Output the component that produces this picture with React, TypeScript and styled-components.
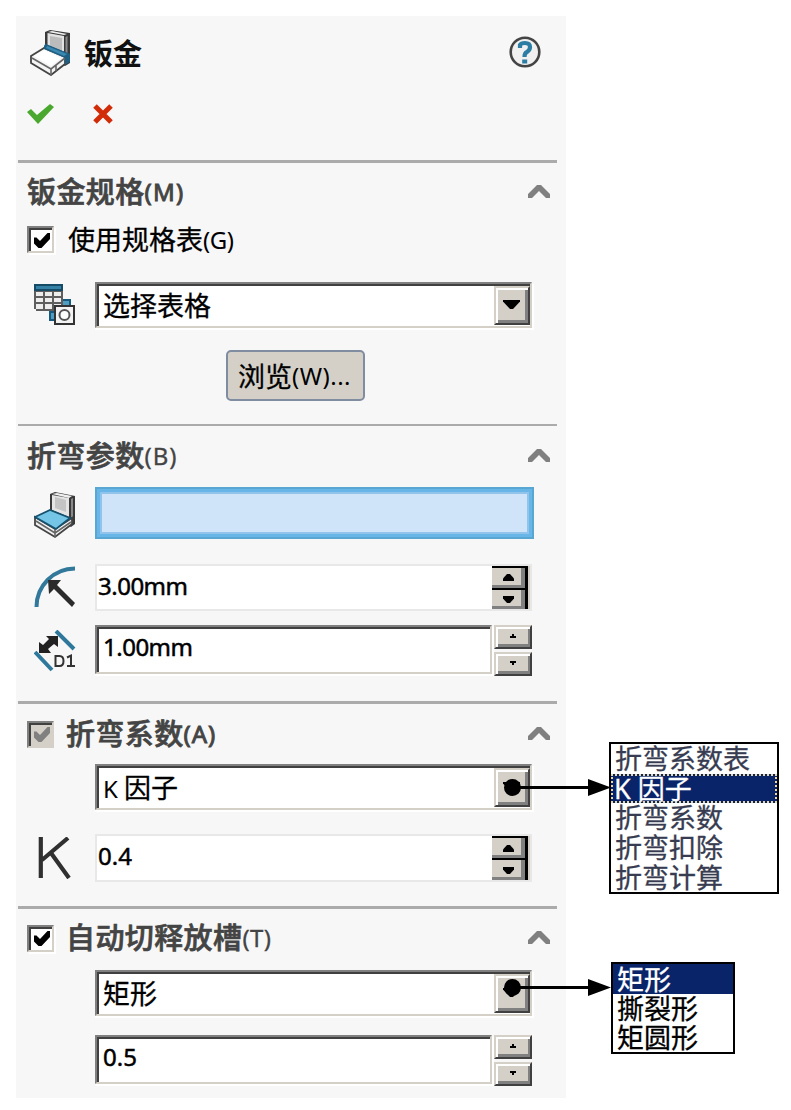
import React from "react";
import styled, { createGlobalStyle, css } from "styled-components";

const Global = createGlobalStyle`
  * { box-sizing: border-box; }
  body { margin: 0; background: #fff; }
  svg { display: block; flex: none; }
`;

const latin = `"Noto Sans", "Noto Sans CJK SC", sans-serif`;

const Stage = styled.main`
  position: relative;
  width: 791px;
  height: 1110px;
  padding: 16px;
  overflow: hidden;
  font-family: ${latin};
  color: #000;
`;

const Panel = styled.div`
  width: 550px;
  height: 1082px;
  background: #f7f7f7;
`;

const Header = styled.header`
  height: 144px;
  padding: 13px 25px 0 11px;
`;

const TitleBar = styled.div`
  display: flex;
  align-items: flex-start;
  height: 74px;
  padding-left: 3px;
`;

const Title = styled.h1`
  flex: 1;
  margin: 2px 0 0 13px;
  font-size: 29px;
  line-height: 46px;
  font-weight: 700;
  color: #111;
`;

const HelpSlot = styled.div`
  padding-top: 7px;
`;

const Actions = styled.div`
  display: flex;
  gap: 38px;
`;

const Section = styled.section<{ $height: number; $rule?: number }>`
  height: ${(p) => p.$height}px;
  margin: 0 9px 0 2px;
  padding: 0 2px 0 9px;
  border-top: ${(p) => p.$rule ?? 3}px solid #ababab;
`;

const SectionHead = styled.div<{ $top: number }>`
  display: flex;
  align-items: center;
  height: 30px;
  margin-top: ${(p) => p.$top}px;
  padding-right: 5px;
`;

const Heading = styled.h2<{ $indent?: number }>`
  display: flex;
  flex: 1;
  margin: 0 0 0 ${(p) => p.$indent ?? 0}px;
  font-size: 29px;
  line-height: 32px;
  font-weight: 500;
  letter-spacing: 0.4px;
  -webkit-text-stroke: 0.7px #444;
  color: #444;
  white-space: nowrap;
`;

const Key = styled.span<{ $bold?: boolean; $spacing?: number; $thin?: boolean }>`
  font-size: 24px;
  font-weight: 400;
  letter-spacing: ${(p) => p.$spacing ?? 0}px;
  -webkit-text-stroke-width: ${(p) => (p.$bold ? 0.9 : p.$thin ? 0.3 : 0)}px;
`;

const Row = styled.div<{ $top: number; $height: number }>`
  display: flex;
  align-items: flex-start;
  height: ${(p) => p.$height}px;
  margin-top: ${(p) => p.$top}px;
`;

const IconCell = styled.div<{ $top?: number }>`
  width: 68px;
  padding: ${(p) => p.$top ?? 0}px 0 0 7px;
`;

const Check = styled.span<{ $disabled?: boolean }>`
  display: flex;
  flex: none;
  align-items: center;
  justify-content: center;
  width: 27px;
  height: 27px;
  padding: 1px 0 0 2px;
  border: 2px solid;
  border-color: #808080 #d4d0c8 #d4d0c8 #808080;
  background: ${(p) => (p.$disabled ? "#d4d0c8" : "#fff")};
  box-shadow: inset 2px 2px 0 #404040, 2px 2px 0 ${(p) => (p.$disabled ? "#f7f7f7" : "#fff")};
`;

const CheckLabel = styled.span`
  display: flex;
  margin-left: 14px;
  font-size: 27px;
  line-height: 28px;
  white-space: nowrap;
  -webkit-text-stroke: 0.3px #000;
`;

const sunken = css`
  border: 2px solid;
  border-color: #808080 #d4d0c8 #d4d0c8 #808080;
  box-shadow: inset 2px 2px 0 #404040, 2px 2px 0 #fff, 0 2px 0 #fff;
`;

const Combo = styled.div`
  ${sunken}
  display: flex;
  justify-content: space-between;
  width: 437px;
  height: 46px;
  padding: 2px 0 0 6px;
  background: #fff;
  font-size: 27px;
  line-height: 40px;
  white-space: nowrap;
  -webkit-text-stroke: 0.3px #000;
`;

const DropButton = styled.span`
  display: flex;
  align-items: center;
  justify-content: center;
  width: 36px;
  height: 39px;
  padding: 0 2px 3px 0;
  border: 2px solid;
  border-color: #d4d0c8 #404040 #404040 #d4d0c8;
  background: #d4d0c8;
  box-shadow: inset 2px 2px 0 #fff, inset -3px -3px 0 #808080;
`;

const Field = styled.div`
  ${sunken}
  width: 397px;
  height: 49px;
  padding: 0 0 0 6px;
  background: #fff;
  font-size: 24px;
  line-height: 40px;
`;

const FlatField = styled.div<{ $height: number }>`
  display: flex;
  justify-content: space-between;
  width: 437px;
  height: ${(p) => p.$height}px;
  padding-left: 1px;
  border: 2px solid #e8e8e8;
  background: #fff;
  font-size: 24px;
  line-height: 40px;
`;

const Value = styled.span<{ $spacing?: number }>`
  letter-spacing: ${(p) => p.$spacing ?? -0.5}px;
  -webkit-text-stroke: 0.5px #000;
`;

const Stepper = styled.div`
  display: flex;
  flex-direction: column;
  gap: 3px;
  margin-left: 2px;
`;

const StepButton = styled.span`
  display: flex;
  align-items: center;
  justify-content: center;
  width: 38px;
  height: 24px;
  padding-bottom: 2px;
  border: 2px solid;
  border-color: #d4d0c8 #404040 #404040 #d4d0c8;
  background: #d4d0c8;
  box-shadow: inset 2px 2px 0 #fff, inset -2px -3px 0 #808080;
`;

const SpinColumn = styled.div`
  display: flex;
  flex-direction: column;
  width: 38px;
  border-right: 2px solid #d4d0c8;
`;

const SpinHalf = styled.span`
  display: flex;
  flex: 1;
  align-items: center;
  justify-content: center;
  border-top: 2px solid #000;
  border-right: 3px solid #000;
  background: #d4d0c8;
  box-shadow: inset -4px -3px 0 #808080;
`;

const Selection = styled.div`
  width: 439px;
  height: 52px;
  border: 2px solid #5aa6d2;
  background: #cfe4f8;
  box-shadow: inset 0 0 0 3px #67b6e7, inset 0 0 0 5px #92c3ea;
`;

const Browse = styled.button`
  display: flex;
  align-items: center;
  width: 139px;
  height: 51px;
  margin: 0 0 0 199px;
  padding: 0 0 0 10px;
  border: 2px solid #808ca0;
  border-radius: 5px;
  background: #d4d0c8;
  font: 27px ${latin};
  color: #000;
  white-space: nowrap;
  -webkit-text-stroke: 0.3px #000;
`;

const Popup = styled.ul<{ $x: number; $y: number; $w: number; $h: number }>`
  position: absolute;
  left: ${(p) => p.$x}px;
  top: ${(p) => p.$y}px;
  width: ${(p) => p.$w}px;
  height: ${(p) => p.$h}px;
  margin: 0;
  padding: 0;
  border: 2px solid #000;
  background: #fff;
  list-style: none;
`;

const Option = styled.li<{ $height: number; $selected?: boolean; $muted?: boolean; $dotted?: boolean }>`
  display: flex;
  align-items: center;
  height: ${(p) => p.$height}px;
  padding-left: ${(p) => (p.$dotted ? 1 : 4)}px;
  border: ${(p) => (p.$dotted ? "2px dotted #e8d9a4" : "0")};
  background: ${(p) => (p.$selected ? "#0a246a" : "transparent")};
  color: ${(p) => (p.$selected ? "#fff" : p.$muted ? "#383c50" : "#000")};
  font-size: 27px;
  line-height: 1;
  white-space: pre;
  -webkit-text-stroke-width: 0.3px;
`;

const Arrow = styled.svg<{ $y: number }>`
  position: absolute;
  left: 503px;
  top: ${(p) => p.$y}px;
`;

const TickMark = ({ color = "#000" }: { color?: string }) => (
  <svg width="16" height="15" viewBox="0 0 16 15">
    <path fill={color} d="M0 4.500h2.500L6 8l7.500-8H16v6L7.500 15h-3L0 10.500z" />
  </svg>
);

const Chevron = () => (
  <svg width="22" height="15" viewBox="0 0 22 15">
    <path fill="#808080" d="M9 0h4l9 9v4h-4l-7-7-7 7H0V9z" />
  </svg>
);

const DropGlyph = () => (
  <svg width="17" height="9" viewBox="0 0 17 9">
    <path d="M0 0h17v1.500L10 9H7L0 1.500z" />
  </svg>
);

const Nudge = ({ up, big }: { up?: boolean; big?: boolean }) => (
  <svg width={big ? 11 : 6} height={big ? 7 : 4} viewBox={big ? "0 0 11 7" : "0 0 6 4"}>
    <path
      transform={up ? `translate(0 ${big ? 7 : 4}) scale(1 -1)` : undefined}
      d={big ? "M0 0h11v2.500L7 7H4L0 2.500z" : "M0 0h6v2h-2v2h-2v-2h-2z"}
    />
  </svg>
);

const TitleIcon = () => (
  <svg width="41" height="47" viewBox="0 0 41 47">
    <path d="M15 3l5-2 20 3v30l-5 3-20-12z" fill="#3a3a3a" />
    <path d="M17.500 4l16.500 3v19l-16.500-7z" fill="#e2e2e2" />
    <path d="M20 7l12 2v13l-12-4z" fill="#bcbcbc" />
    <path d="M35.500 8l2-1v18h-2z" fill="#8a8a8a" />
    <path d="M18 3l4-1 15 3-3 1z" fill="#f0f0f0" />
    <path d="M15 15l25 10v8l-6 3-22-12z" fill="#1f5f82" />
    <path d="M1 27l13-8 21 9v7L21 46 1 34z" fill="#f4f4f4" stroke="#444" strokeWidth="1.8" />
    <path d="M2 29l19 11 14-11M21 39v7M26 36v6" fill="none" stroke="#666" strokeWidth="1.6" />
    <path d="M4 27l10-6 17 8-10 8z" fill="#fff" />
    <path d="M14 17l2-2 24 10v7l-5 4v-7l-21-9z" fill="#1f5f82" />
    <path d="M17 17l20 8-3 2-18-8z" fill="#3a87b1" />
  </svg>
);

const FaceIcon = () => (
  <svg width="42" height="48" viewBox="0 0 42 48">
    <path d="M16 3l5-2 20 4v28l-4 3-21-12z" fill="#3a3a3a" />
    <path d="M18 4l17 3v19l-17-7z" fill="#e4e4e4" />
    <path d="M21 6l11 3v12l-11-4z" fill="#c4c4c4" />
    <path d="M37 8l2-1v19h-2z" fill="#8a8a8a" />
    <path d="M18 3l5-1 15 3-3 2z" fill="#f0f0f0" />
    <path d="M1 26l20 12 17-11v6L21 46 1 34z" fill="#f1f1f1" stroke="#444" strokeWidth="1.8" />
    <path d="M2 30l19 12 16-11M21 38v8" fill="none" stroke="#666" strokeWidth="1.6" />
    <path d="M1 26l15-7 20 8-14 11z" fill="#75c5e7" stroke="#15526f" strokeWidth="1.8" />
  </svg>
);

const TableIcon = () => (
  <svg width="42" height="42" viewBox="0 0 42 42" shapeRendering="crispEdges">
    <path d="M27 15h10v12H27zM15 27h12v10H15z" fill="#185a7d" />
    <path d="M29 17h6v5h-6zM17 29h5v6h-5z" fill="#4f9dc1" />
    <path d="M0 0h29v27H2v-2H0z" fill="#5e5e5e" />
    <path d="M0 0h29v7H0z" fill="#164b68" />
    <path d="M2 2h25v3H2z" fill="#3581a5" />
    <path
      d="M2 8h7v4H2zM11 8h7v4h-7zM20 8h7v4h-7zM2 14h7v4H2zM11 14h7v4h-7zM20 14h7v4h-7zM2 20h7v5H2zM11 20h7v5h-7zM20 20h7v5h-7z"
      fill="#ededed"
    />
    <path d="M20 21h21v20H20z" fill="#333" />
    <path d="M22 23h17v16H22z" fill="#f3f3f3" />
    <circle cx="30.5" cy="31" r="5" fill="#fff" stroke="#555" strokeWidth="2" shapeRendering="auto" />
  </svg>
);

const RadiusIcon = () => (
  <svg width="42" height="42" viewBox="0 0 42 42">
    <path d="M2.500 41A38.500 38.500 0 0 1 41 2.500" fill="none" stroke="#31789b" strokeWidth="4" />
    <path d="M14 14h13l-4 5 18 18-3 4-18-18-5 5z" fill="#2b2b2b" />
  </svg>
);

const ThicknessIcon = () => (
  <svg width="42" height="42" viewBox="0 0 42 42">
    <path d="M22 1l18 18M1 22l17 18" stroke="#2e789b" strokeWidth="4" />
    <path d="M12 6h12v11l-4-3-6 5 3 4H5V12l4 3 6-6z" fill="#222" />
    <path
      d="M21.500 26v10h4q4 0 4-5t-4-5zM33 27.500l4-2v10.500m-4 0h8"
      fill="none"
      stroke="#333"
      strokeWidth="2"
    />
  </svg>
);

const KIcon = () => (
  <svg width="38" height="42" viewBox="0 0 38 42">
    <path d="M6.800 0v41M34 1L8 23M17 16l18 25" fill="none" stroke="#303030" strokeWidth="4.200" />
  </svg>
);

const HelpIcon = () => (
  <svg width="32" height="32" viewBox="0 0 32 32">
    <circle cx="16" cy="16" r="14.3" fill="#f0f0f0" stroke="#444" strokeWidth="2.6" />
    <path d="M11 12V9q1-2 5-2 5 0 5 4 0 3-3 5-2.500 1-2.500 5" fill="none" stroke="#2b7da3" strokeWidth="4.200" />
    <path d="M13.200 23.500h5v4h-5z" fill="#2b7da3" />
  </svg>
);

const OkIcon = () => (
  <svg width="28" height="22" viewBox="0 0 28 22">
    <path d="M0 9l4-3 6 6L23 1l4 3L11 21z" fill="#4ba82e" />
  </svg>
);

const CancelIcon = () => (
  <svg width="21" height="22" viewBox="0 0 21 22">
    <path d="M2 3l16 16M18 3L2 19" fill="none" stroke="#d22b08" strokeWidth="5" strokeLinecap="butt" />
  </svg>
);

const Leader = ({ y }: { y: number }) => (
  <Arrow $y={y} width="110" height="20" viewBox="0 0 110 20">
    <circle cx="9.500" cy="10.500" r="8.500" />
    <path d="M9 9h76V2l23 8.500L85 19v-7H9z" />
  </Arrow>
);

const ComboBox = ({ children }: { children: React.ReactNode }) => (
  <Combo>
    <span>{children}</span>
    <DropButton>
      <DropGlyph />
    </DropButton>
  </Combo>
);

const FlatSpin = ({ value, height, spacing }: { value: string; height: number; spacing?: number }) => (
  <FlatField $height={height}>
    <Value $spacing={spacing}>{value}</Value>
    <SpinColumn>
      <SpinHalf>
        <Nudge up big />
      </SpinHalf>
      <SpinHalf>
        <Nudge big />
      </SpinHalf>
    </SpinColumn>
  </FlatField>
);

const SpinField = ({ value, spacing }: { value: string; spacing?: number }) => (
  <>
    <Field>
      <Value $spacing={spacing}>{value}</Value>
    </Field>
    <Stepper>
      <StepButton>
        <Nudge up />
      </StepButton>
      <StepButton>
        <Nudge />
      </StepButton>
    </Stepper>
  </>
);

const coefficientTypes = ["折弯系数表", "K 因子", "折弯系数", "折弯扣除", "折弯计算"];
const reliefTypes = ["矩形", "撕裂形", "矩圆形"];

export default function App() {
  return (
    <Stage>
      <Global />
      <Panel>
        <Header>
          <TitleBar>
            <TitleIcon />
            <Title>钣金</Title>
            <HelpSlot>
              <HelpIcon />
            </HelpSlot>
          </TitleBar>
          <Actions>
            <OkIcon />
            <CancelIcon />
          </Actions>
        </Header>

        <Section $height={264}>
          <SectionHead $top={14}>
            <Heading>
              钣金规格<Key $bold $spacing={1.2}>(M)</Key>
            </Heading>
            <Chevron />
          </SectionHead>
          <Row $top={19} $height={27}>
            <Check>
              <TickMark />
            </Check>
            <CheckLabel>
              使用规格表<Key $spacing={-0.5}>(G)</Key>
            </CheckLabel>
          </Row>
          <Row $top={29} $height={46}>
            <IconCell $top={2}>
              <TableIcon />
            </IconCell>
            <ComboBox>选择表格</ComboBox>
          </Row>
          <Row $top={22} $height={51}>
            <Browse>
              浏览<Key $spacing={0.5}>(W)...</Key>
            </Browse>
          </Row>
        </Section>

        <Section $height={277} $rule={2}>
          <SectionHead $top={15}>
            <Heading>
              折弯参数<Key $thin $spacing={0.9}>(B)</Key>
            </Heading>
            <Chevron />
          </SectionHead>
          <Row $top={16} $height={52}>
            <IconCell $top={4}>
              <FaceIcon />
            </IconCell>
            <Selection />
          </Row>
          <Row $top={25} $height={47}>
            <IconCell $top={2}>
              <RadiusIcon />
            </IconCell>
            <FlatSpin value="3.00mm" height={47} />
          </Row>
          <Row $top={14} $height={51}>
            <IconCell $top={5}>
              <ThicknessIcon />
            </IconCell>
            <SpinField value="1.00mm" />
          </Row>
        </Section>

        <Section $height={205}>
          <SectionHead $top={15}>
            <Check $disabled>
              <TickMark color="#808080" />
            </Check>
            <Heading $indent={12}>
              折弯系数<Key $bold $spacing={0.9}>(A)</Key>
            </Heading>
            <Chevron />
          </SectionHead>
          <Row $top={15} $height={46}>
            <IconCell />
            <ComboBox>
              <Key $spacing={-1}>K</Key> 因子
            </ComboBox>
          </Row>
          <Row $top={24} $height={48}>
            <IconCell $top={3}>
              <KIcon />
            </IconCell>
            <FlatSpin value="0.4" height={48} spacing={0} />
          </Row>
        </Section>

        <Section $height={192}>
          <SectionHead $top={14}>
            <Check>
              <TickMark />
            </Check>
            <Heading $indent={12}>
              自动切释放槽<Key $thin $spacing={0.4}>(T)</Key>
            </Heading>
            <Chevron />
          </SectionHead>
          <Row $top={17} $height={46}>
            <IconCell />
            <ComboBox>矩形</ComboBox>
          </Row>
          <Row $top={19} $height={52}>
            <IconCell />
            <SpinField value="0.5" spacing={0} />
          </Row>
        </Section>
      </Panel>

      <Popup $x={609} $y={742} $w={170} $h={152}>
        {coefficientTypes.map((name, i) => (
          <Option key={name} $height={29.6} $muted $selected={i === 1} $dotted={i === 1}>
            {name}
          </Option>
        ))}
      </Popup>
      <Popup $x={611} $y={962} $w={124} $h={92}>
        {reliefTypes.map((name, i) => (
          <Option key={name} $height={i === 0 ? 30 : 29} $selected={i === 0}>
            {name}
          </Option>
        ))}
      </Popup>
      <Leader y={777} />
      <Leader y={977} />
    </Stage>
  );
}
